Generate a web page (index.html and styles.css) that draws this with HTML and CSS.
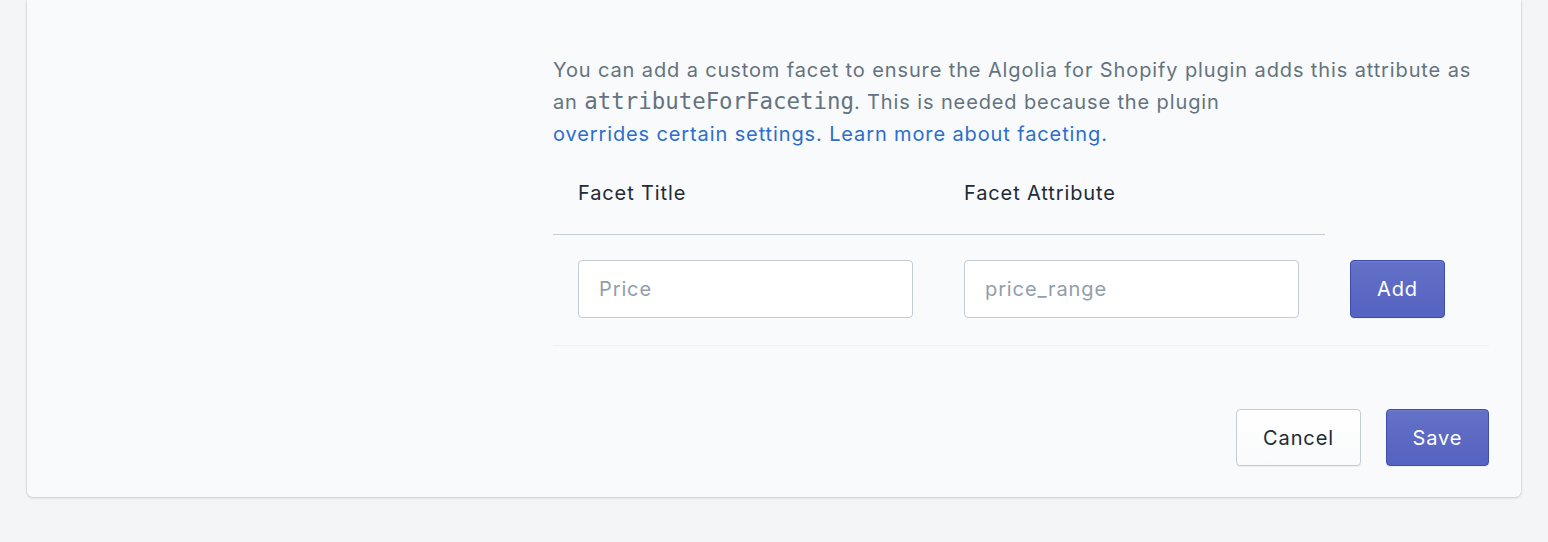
FILE: index.html
```html
<!DOCTYPE html>
<html>
<head>
<meta charset="utf-8">
<link rel="stylesheet" href="styles.css">
</head>
<body>
<div class="page">
  <div class="card">
    <div class="layout">
      <div class="annotation"></div>
      <div class="content">
        <p class="help">You can add a custom facet to ensure the Algolia for Shopify plugin adds this attribute as an <code>attributeForFaceting</code>. This is needed because the plugin <a class="help-link" href="#">overrides certain settings. Learn more about faceting.</a></p>
        <table class="facets">
          <thead>
            <tr>
              <th class="col-title">Facet Title</th>
              <th class="col-attr">Facet Attribute</th>
              <th class="col-action"></th>
            </tr>
          </thead>
          <tbody>
            <tr>
              <td><input class="field" type="text" placeholder="Price"></td>
              <td><input class="field" type="text" placeholder="price_range"></td>
              <td><button class="btn btn-primary btn-add">Add</button></td>
            </tr>
          </tbody>
        </table>
        <div class="actions">
          <button class="btn btn-default">Cancel</button>
          <button class="btn btn-primary">Save</button>
        </div>
      </div>
    </div>
  </div>
</div>
</body>
</html>
```
FILE: styles.css
```css
* { box-sizing: border-box; }
html, body {
  margin: 0;
  background: #f4f5f7;
  font-family: Inter, "Noto Sans", sans-serif;
  font-size: 20px;
  letter-spacing: 0.88px;
  color: #212b36;
}
.page {
  padding: 0 27px 0 27px;
  height: 542px;
}
.card {
  background: #f9fafb;
  border-radius: 0 0 6px 6px;
  box-shadow: 0 0 0 1px rgba(63,63,68,0.06), 0 1px 3px rgba(63,63,68,0.18);
  padding: 54px 32px 31px 0;
}
.layout {
  display: grid;
  grid-template-columns: 526px 1fr;
}
.help {
  margin: 0;
  line-height: 32px;
  height: 96px;
  color: #637381;
}
.help code {
  font-family: "DejaVu Sans Mono", monospace;
  font-size: 22.4px;
  line-height: 0;
  letter-spacing: 0;
  color: #637381;
}
.help-link {
  display: inline-block;
  color: #2c6ecb;
  text-decoration: none;
}
.facets {
  width: 100%;
  border-collapse: collapse;
  table-layout: fixed;
}
.facets th {
  text-align: left;
  font-weight: 400;
  padding: 27px 25px 25px 25px;
  line-height: 32px;
  border-bottom: 1px solid #c4cdd5;
  color: #212b36;
}
.facets th.col-title, .facets th.col-attr { width: 386px; }
.facets th.col-action { border-bottom: none; }
.facets td {
  padding: 25px 26px 27px 25px;
  border-bottom: 1px solid #eef0f3;
  vertical-align: middle;
}
.field {
  display: block;
  width: 100%;
  height: 58px;
  padding: 0 20px;
  font-family: inherit;
  font-size: 20px;
  letter-spacing: 0.88px;
  color: #212b36;
  background: #fff;
  border: 1px solid #c4cdd5;
  border-radius: 4px;
}
.field::placeholder { color: #919eab; }
.btn {
  font-family: inherit;
  font-size: 20px;
  letter-spacing: 0.88px;
  height: 57px;
  padding: 0 26px;
  border-radius: 4px;
  cursor: pointer;
}
.btn-primary {
  background: linear-gradient(180deg, #6371c7, #5563c1);
  border: 1px solid #3f4eae;
  color: #fff;
  box-shadow: inset 0 1px 0 0 #6f7bcb, 0 1px 0 0 rgba(22,29,37,0.05);
}
.btn-add { height: 58px; width: 95px; padding: 0; }
.btn-default {
  background: linear-gradient(180deg, #fff, #f9fafb);
  border: 1px solid #c4cdd5;
  color: #212b36;
  box-shadow: 0 1px 0 0 rgba(22,29,37,0.05);
  width: 125px;
  padding: 0;
}
.actions {
  display: flex;
  justify-content: flex-end;
  gap: 25px;
  margin-top: 63px;
}
.actions .btn-primary { width: 103px; padding: 0; }
```
